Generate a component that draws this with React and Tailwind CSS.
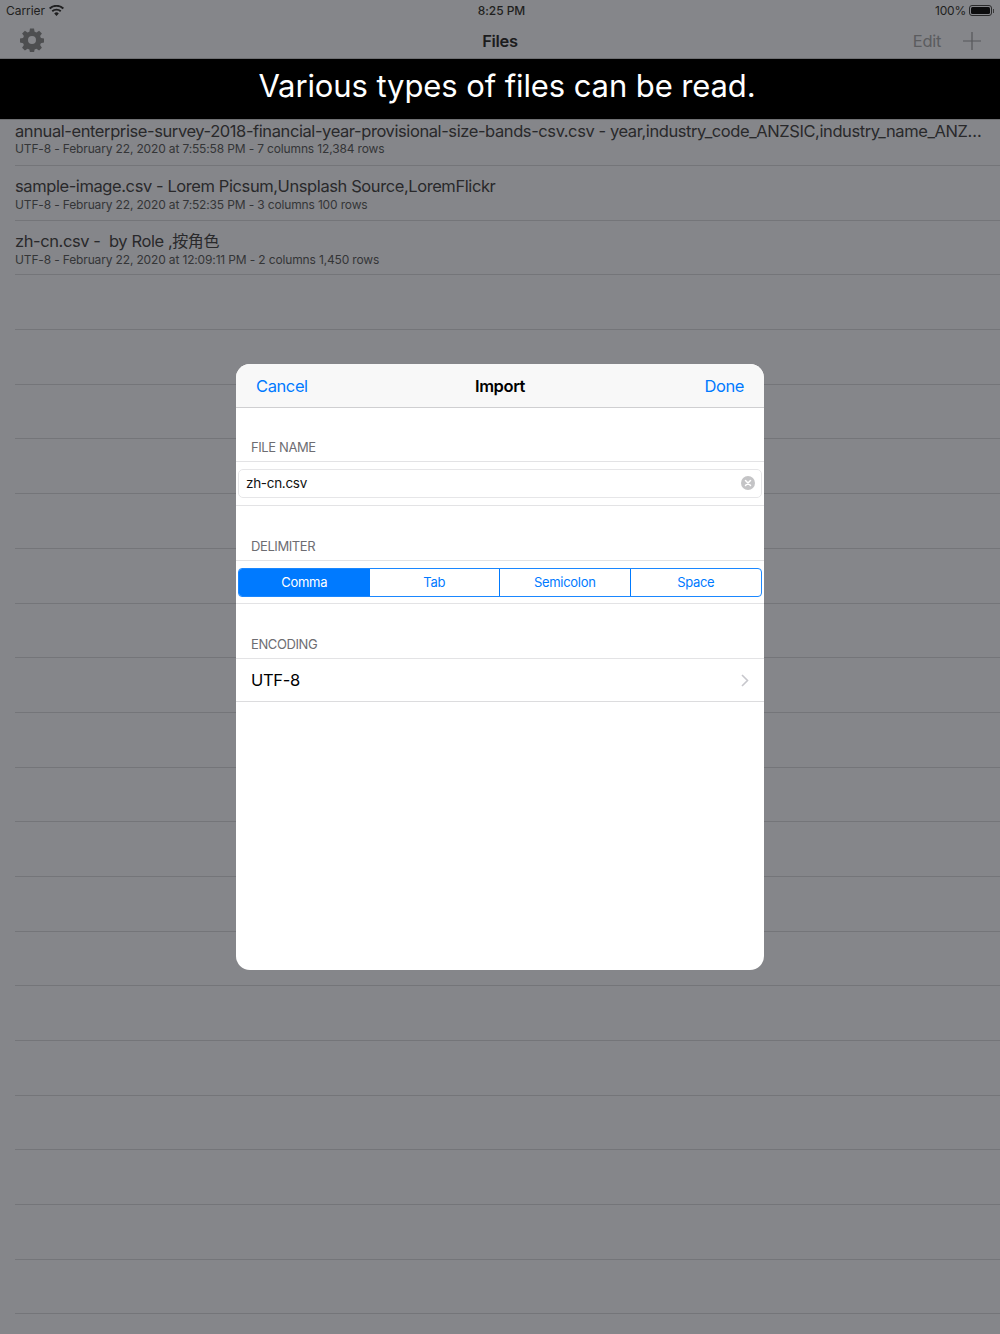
const FONT = 'font-["Inter","Noto_Sans_CJK_SC",sans-serif]';

const files = [
  { title: "annual-enterprise-survey-2018-financial-year-provisional-size-bands-csv.csv - year,industry_code_ANZSIC,industry_name_ANZ…", sub: "UTF-8 - February 22, 2020 at 7:55:58 PM - 7 columns 12,384 rows" },
  { title: "sample-image.csv - Lorem Picsum,Unsplash Source,LoremFlickr", sub: "UTF-8 - February 22, 2020 at 7:52:35 PM - 3 columns 100 rows" },
  { title: "zh-cn.csv -  by Role ,", cjk: "按角色", sub: "UTF-8 - February 22, 2020 at 12:09:11 PM - 2 columns 1,450 rows" },
];

function Gear() {
  return (
    <svg width="24" height="24" viewBox="0 0 24 24" className="text-[#4d4e50]">
      <path fill="currentColor" fillRule="evenodd" d="M10 0.6h4l.6 3.1 1.9.8 2.6-1.8 2.8 2.8-1.8 2.6.8 1.9 3.1.6v4l-3.1.6-.8 1.9 1.8 2.6-2.8 2.8-2.6-1.8-1.9.8-.6 3.1h-4l-.6-3.1-1.9-.8-2.6 1.8-2.8-2.8 1.8-2.6-.8-1.9-3.1-.6v-4l3.1-.6.8-1.9-1.8-2.6 2.8-2.8 2.6 1.8 1.9-.8zM12 8a4 4 0 1 0 0 8 4 4 0 0 0 0-8z" />
    </svg>
  );
}

function Wifi() {
  return (
    <svg width="15" height="11" viewBox="0 0 15 11" className="text-[#1f1f20]">
      <path fill="currentColor" d="M7.5 11 5.2 8.4a3.3 3.3 0 0 1 4.6 0zM3.9 7 2.6 5.6a7.2 7.2 0 0 1 9.8 0L11.1 7a5.3 5.3 0 0 0-7.2 0zM1.3 4.2 0 2.8a11 11 0 0 1 15 0l-1.3 1.4a9.1 9.1 0 0 0-12.4 0z" />
    </svg>
  );
}

function Battery() {
  return (
    <div className="flex items-center">
      <div className="w-[23px] h-[11px] rounded-[3px] border border-[#2a2a2b] p-px">
        <div className="w-full h-full rounded-[1.5px] bg-[#0d0d0e]" />
      </div>
      <div className="w-px h-[4px] bg-[#3a3a3b] ml-px" />
    </div>
  );
}

function SectionHeader({ children, className = "" }) {
  return (
    <div className={`flex items-end pl-[15px] pb-[5px] text-[13px] leading-[18px] tracking-[-0.4px] text-[#6d6d72] border-b border-[#e3e3e5] ${className}`}>
      {children}
    </div>
  );
}

function Import() {
  const segs = ["Comma", "Tab", "Semicolon", "Space"];
  return (
    <div className="absolute left-[236px] top-[364px] w-[528px] h-[606px] rounded-[14px] bg-white overflow-hidden">
      <div className="h-[44px] bg-[#f8f8f8] border-b border-[#cfcfd1] px-[20px] pt-[1px] flex items-center justify-between relative text-[16.5px] tracking-[-0.4px]">
        <span className="text-[#007aff]">Cancel</span>
        <span className="absolute left-0 right-0 text-center font-semibold text-black">Import</span>
        <span className="text-[#007aff]">Done</span>
      </div>
      <SectionHeader className="h-[54px]">FILE NAME</SectionHeader>
      <div className="h-[44px] border-b border-[#e3e3e5] px-[2px] pb-[1px] flex items-center">
        <div className="w-full h-[29px] rounded-[5px] border border-[#e6e6e8] flex items-center justify-between pl-[7px] pr-[6px]">
          <span className="text-[13.5px] tracking-[-0.3px] text-[#111]">zh-cn.csv</span>
          <div className="w-[14px] h-[14px] rounded-full bg-[#c4c4c6] flex items-center justify-center">
            <svg width="8" height="8" viewBox="0 0 8 8"><path d="M1.5 1.5l5 5M6.5 1.5l-5 5" stroke="#fff" strokeWidth="1.5" strokeLinecap="round" /></svg>
          </div>
        </div>
      </div>
      <SectionHeader className="h-[55px]">DELIMITER</SectionHeader>
      <div className="h-[43px] border-b border-[#e3e3e5] px-[2px] flex items-center">
        <div className="w-full h-[29px] rounded-[4px] border border-[#1a87ff] grid grid-cols-4 overflow-hidden">
          {segs.map((s, i) => (
            <div key={s} className={`flex items-center justify-center pt-[1px] text-[13px] tracking-[-0.3px] ${i === 0 ? "bg-[#007aff] text-white" : "text-[#007aff]"} ${i > 0 && i < 3 ? "border-r border-[#007aff]" : ""}`}>
              {s}
            </div>
          ))}
        </div>
      </div>
      <SectionHeader className="h-[55px]">ENCODING</SectionHeader>
      <div className="h-[43px] border-b border-[#dcdcde] pl-[15px] pr-[15px] flex items-center justify-between">
        <span className="text-[16.5px] tracking-[-0.3px] text-black">UTF-8</span>
        <svg width="8" height="13" viewBox="0 0 8 13"><path d="M1 1l5.5 5.5L1 12" fill="none" stroke="#c7c7cc" strokeWidth="1.6" /></svg>
      </div>
    </div>
  );
}

export default function App() {
  return (
    <div className={`relative w-[1000px] h-[1334px] overflow-hidden bg-[#85868a] ${FONT}`}>
      <div className="h-[21px] flex items-center justify-between pl-[6px] pr-[6px] text-[12px] tracking-[-0.05px] text-[#1f1f20] relative">
        <div className="flex items-center gap-[4px]"><span>Carrier</span><Wifi /></div>
        <span className="absolute left-0 right-0 text-center font-medium pl-[3px]">8:25 PM</span>
        <div className="flex items-center gap-[3px]"><span className="tracking-[-0.2px]">100%</span><Battery /></div>
      </div>
      <div className="h-[38px] border-b border-[#6e6f72] flex items-center justify-between pl-[20px] pr-[19px] relative">
        <Gear />
        <span className="absolute left-0 right-0 text-center text-[16.5px] tracking-[-0.3px] font-semibold text-[#1c1c1d] pt-[4px]">Files</span>
        <div className="flex items-center gap-[22px] pt-[3px]">
          <span className="text-[16.5px] tracking-[-0.3px] pt-[1px] text-[#5b5c5f]">Edit</span>
          <svg width="18" height="18" viewBox="0 0 18 18"><path d="M9 0v18M0 9h18" stroke="#56575a" strokeWidth="1.2" /></svg>
        </div>
      </div>
      <div className="h-[61px] bg-black border-b border-[#6e6f72] flex items-center justify-center pl-[14px] pb-[6px] text-[31px] tracking-[-0.1px] text-white">
        Various types of files can be read.
      </div>
      <div className="pl-[15px]">
        {files.map((f, i) => (
          <div key={f.sub} className={`border-b border-[#747579] ${i === 0 ? "h-[46px] pt-[1px]" : "h-[54.7px] pt-[10px]"}`}>
            <div className="text-[16.5px] leading-[21px] tracking-[-0.41px] whitespace-pre text-[#29292b]">
              {f.title}
              {f.cjk && <span className="text-[16px]">{f.cjk}</span>}
            </div>
            <div className={`text-[12px] leading-[16px] tracking-[-0.15px] text-[#343537] ${i === 0 ? "-mt-px" : ""}`}>{f.sub}</div>
          </div>
        ))}
        {Array.from({ length: 19 }).map((_, i) => (
          <div key={i} className="h-[54.7px] border-b border-[#747579]" />
        ))}
      </div>
      <Import />
    </div>
  );
}
